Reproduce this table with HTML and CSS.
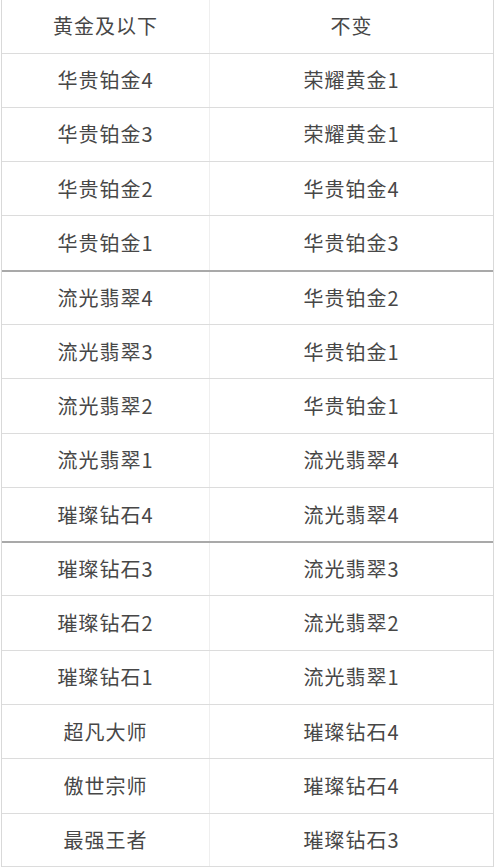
FILE: index.html
```html
<!DOCTYPE html>
<html lang="zh-CN">
<head>
<meta charset="utf-8">
<title>段位继承</title>
<link rel="stylesheet" href="styles.css">
</head>
<body>
<div class="table">
  <div class="row head"><div class="cell">黄金及以下</div><div class="cell">不变</div></div>
  <div class="row"><div class="cell">华贵铂金4</div><div class="cell">荣耀黄金1</div></div>
  <div class="row"><div class="cell">华贵铂金3</div><div class="cell">荣耀黄金1</div></div>
  <div class="row"><div class="cell">华贵铂金2</div><div class="cell">华贵铂金4</div></div>
  <div class="row"><div class="cell">华贵铂金1</div><div class="cell">华贵铂金3</div></div>
  <div class="row group"><div class="cell">流光翡翠4</div><div class="cell">华贵铂金2</div></div>
  <div class="row"><div class="cell">流光翡翠3</div><div class="cell">华贵铂金1</div></div>
  <div class="row"><div class="cell">流光翡翠2</div><div class="cell">华贵铂金1</div></div>
  <div class="row"><div class="cell">流光翡翠1</div><div class="cell">流光翡翠4</div></div>
  <div class="row"><div class="cell">璀璨钻石4</div><div class="cell">流光翡翠4</div></div>
  <div class="row group"><div class="cell">璀璨钻石3</div><div class="cell">流光翡翠3</div></div>
  <div class="row"><div class="cell">璀璨钻石2</div><div class="cell">流光翡翠2</div></div>
  <div class="row"><div class="cell">璀璨钻石1</div><div class="cell">流光翡翠1</div></div>
  <div class="row"><div class="cell">超凡大师</div><div class="cell">璀璨钻石4</div></div>
  <div class="row"><div class="cell">傲世宗师</div><div class="cell">璀璨钻石4</div></div>
  <div class="row last"><div class="cell">最强王者</div><div class="cell">璀璨钻石3</div></div>
</div>
</body>
</html>
```

FILE: styles.css
```css
html, body {
  margin: 0;
  padding: 0;
  background: #ffffff;
}

.table {
  display: flex;
  flex-direction: column;
  width: 493px;
  margin-left: 1px;
  border-left: 1px solid #d9d9d9;
  border-right: 1px solid #d9d9d9;
  box-sizing: border-box;
  font-family: "Noto Sans CJK SC", "Noto Sans", sans-serif;
  font-size: 20px;
  font-weight: 400;
  letter-spacing: 1px;
  color: #474747;
}

.row {
  display: grid;
  grid-template-columns: 208px 1fr;
  height: 54.3px;
  box-sizing: border-box;
  border-top: 1.5px solid #dcdcdc;
}

.row.head {
  height: 52.5px;
  border-top: none;
}

.row.group {
  border-top: 2px solid #a9a9a9;
}

.row.last {
  border-bottom: 1px solid #dcdcdc;
}

.cell {
  display: flex;
  align-items: center;
  justify-content: center;
  line-height: 1;
}

.cell:first-child {
  border-right: 1px solid #efefef;
}
```
